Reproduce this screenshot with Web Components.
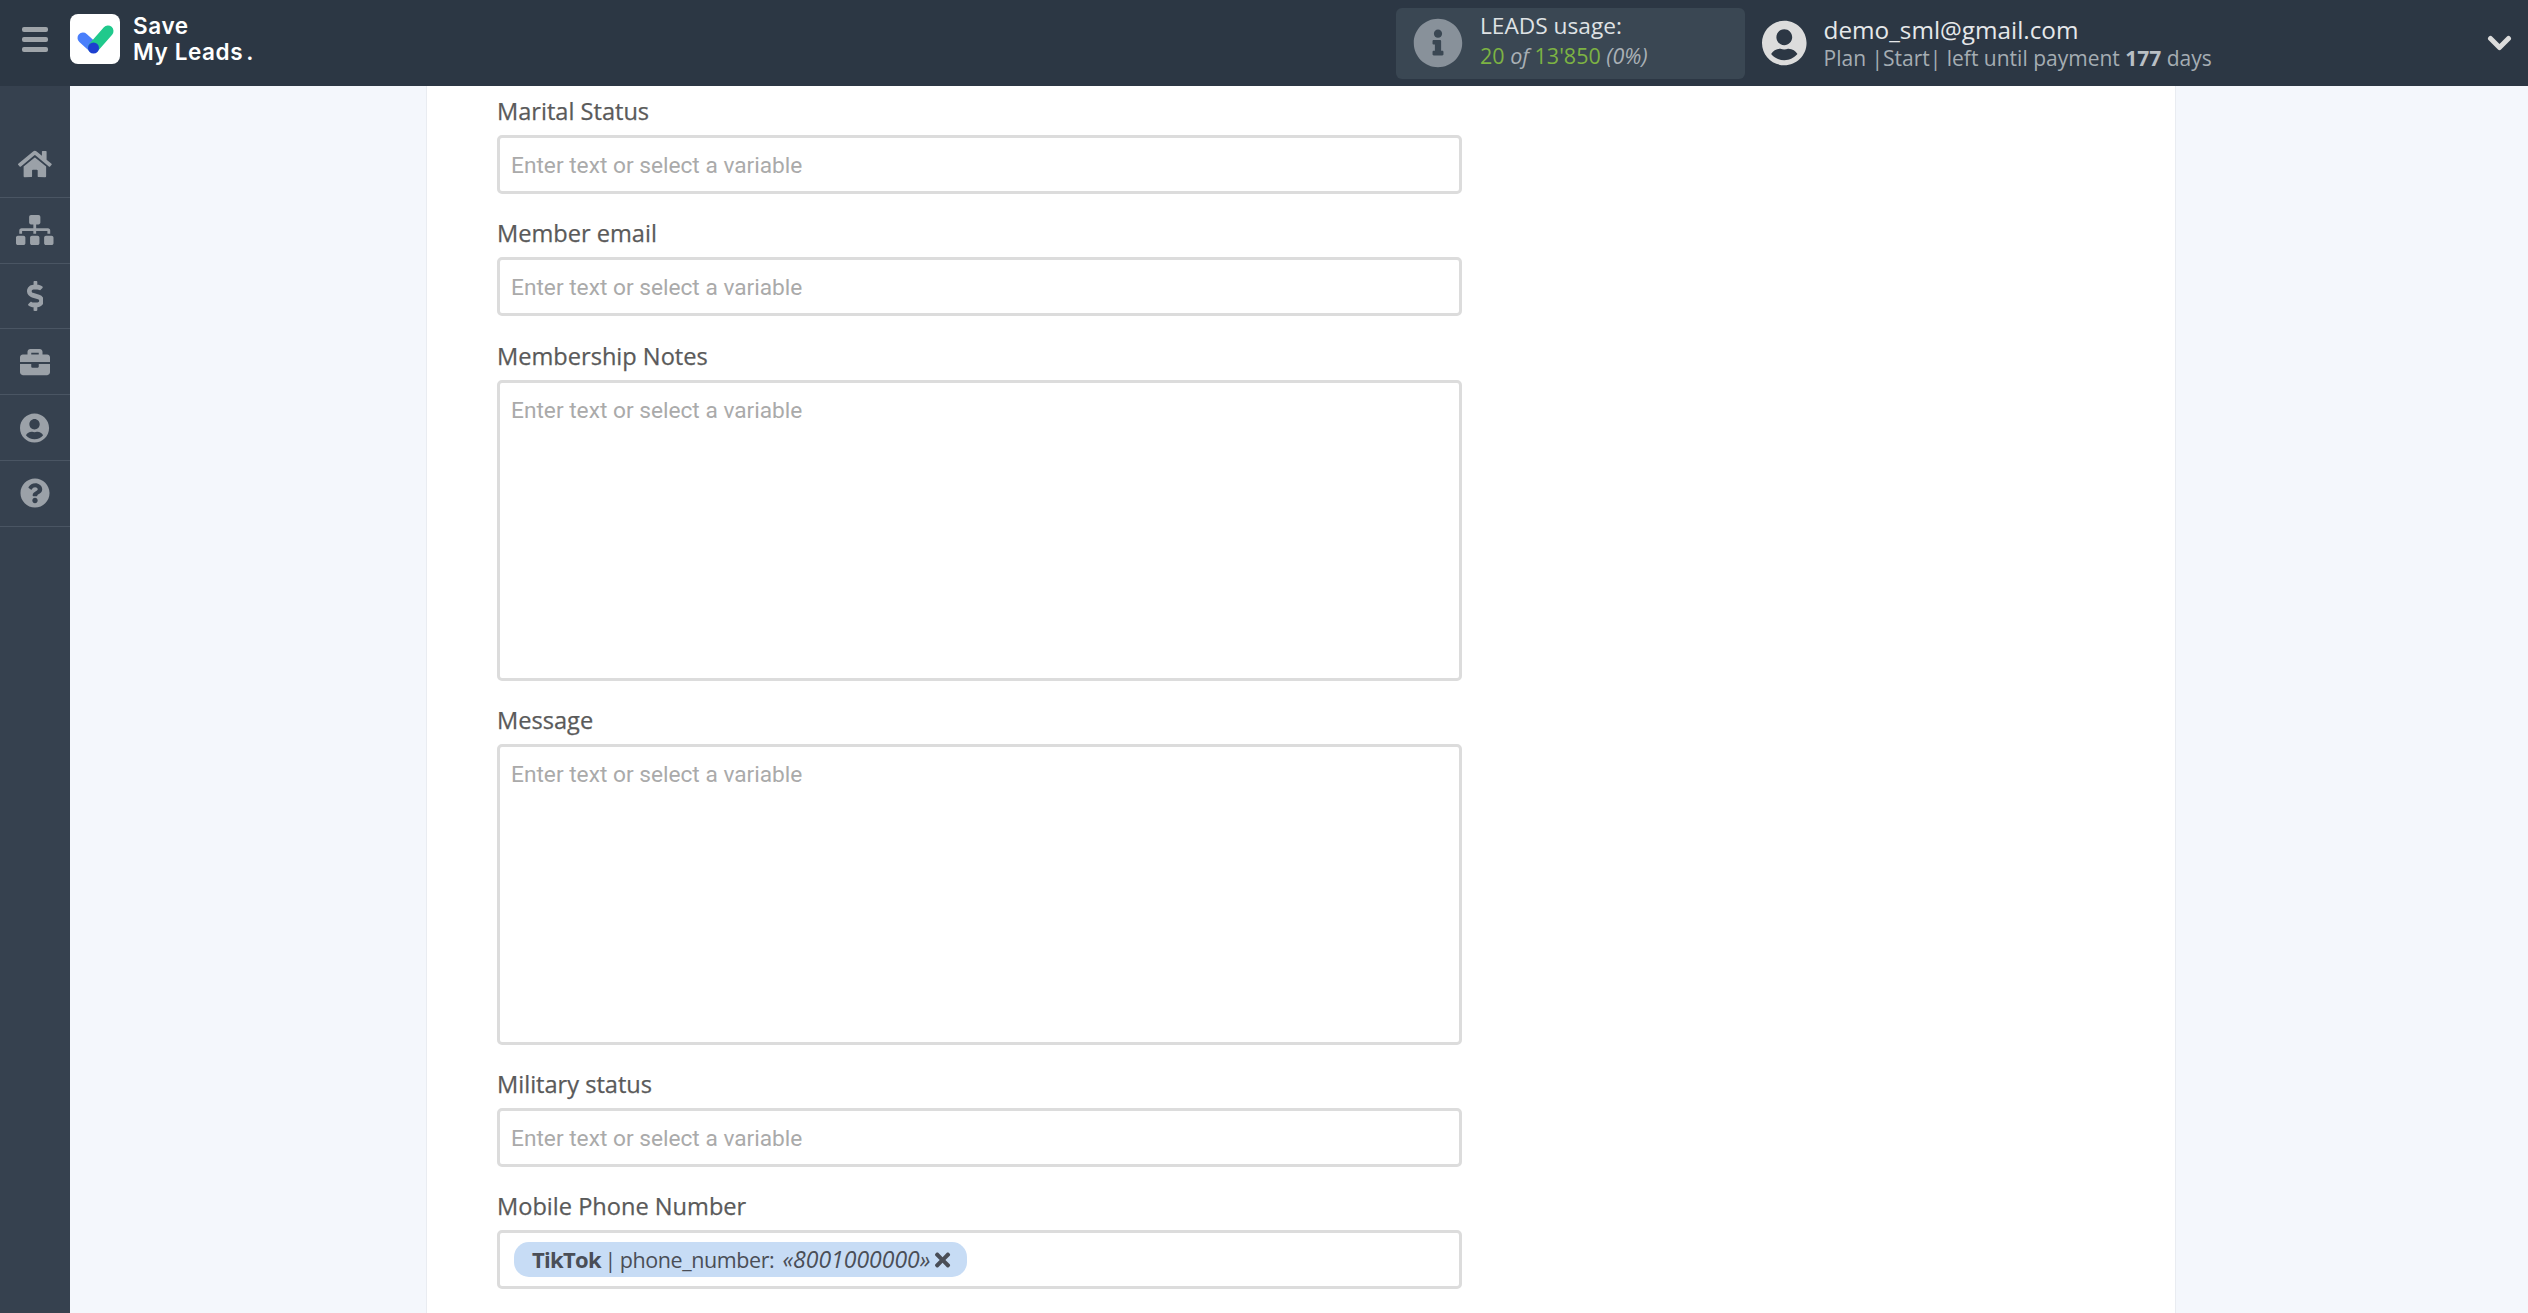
<!DOCTYPE html>
<html lang="en">
<head>
<meta charset="utf-8">
<title>Save My Leads</title>
<style>
  html, body { margin: 0; height: 100%; overflow: hidden; background: #f4f7fc; }
</style>
</head>
<body>
<app-shell>
  <top-bar slot="top"></top-bar>
  <side-nav slot="side"></side-nav>
  <form-card>
    <form-field label="Marital Status" placeholder="Enter text or select a variable"></form-field>
    <form-field label="Member email" placeholder="Enter text or select a variable"></form-field>
    <form-field label="Membership Notes" placeholder="Enter text or select a variable" tall></form-field>
    <form-field label="Message" placeholder="Enter text or select a variable" tall></form-field>
    <form-field label="Military status" placeholder="Enter text or select a variable"></form-field>
    <form-field label="Mobile Phone Number">
      <variable-chip source="TikTok" name="phone_number" value="«8001000000»"></variable-chip>
    </form-field>
  </form-card>
</app-shell>

<script>
// FontAwesome style glyphs used in the nav and chip
const ICONS = {
  home: ['0 0 576 512', 'M280.37 148.26L96 300.11V464a16 16 0 0 0 16 16l112.06-.29a16 16 0 0 0 15.92-16V368a16 16 0 0 1 16-16h64a16 16 0 0 1 16 16v95.64a16 16 0 0 0 16 16.05L464 480a16 16 0 0 0 16-16V300L295.67 148.26a12.19 12.19 0 0 0-15.3 0zM571.6 251.47L488 182.56V44.05a12 12 0 0 0-12-12h-56a12 12 0 0 0-12 12v72.61L318.47 43a48 48 0 0 0-61 0L4.34 251.47a12 12 0 0 0-1.6 16.9l25.5 31A12 12 0 0 0 45.15 301l235.22-193.74a12.19 12.19 0 0 1 15.3 0L530.9 301a12 12 0 0 0 16.9-1.6l25.5-31a12 12 0 0 0-1.7-16.93z'],
  sitemap: ['0 0 640 512', 'M128 352H32c-17.67 0-32 14.33-32 32v96c0 17.67 14.33 32 32 32h96c17.67 0 32-14.33 32-32v-96c0-17.67-14.33-32-32-32zm-24-80h192v48h48v-48h192v48h48v-57.59c0-21.17-17.23-38.41-38.41-38.41H344v-64h40c17.67 0 32-14.33 32-32V32c0-17.67-14.33-32-32-32H256c-17.67 0-32 14.33-32 32v96c0 17.67 14.33 32 32 32h40v64H94.41C73.23 224 56 241.23 56 262.41V320h48v-48zm264 80h-96c-17.67 0-32 14.33-32 32v96c0 17.67 14.33 32 32 32h96c17.67 0 32-14.33 32-32v-96c0-17.67-14.33-32-32-32zm240 0h-96c-17.67 0-32 14.33-32 32v96c0 17.67 14.33 32 32 32h96c17.67 0 32-14.33 32-32v-96c0-17.67-14.33-32-32-32z'],
  dollar: ['0 0 288 512', 'M209.2 233.4l-108-31.6C88.7 198.2 80 186.5 80 173.5c0-16.3 13.2-29.5 29.5-29.5h66.3c12.2 0 24.2 3.7 34.2 10.5 6.1 4.1 14.3 3.1 19.5-2l34.8-34c7.1-6.9 6.1-18.4-1.8-24.5C238 74.8 207.4 64.1 176 64V16c0-8.8-7.2-16-16-16h-32c-8.8 0-16 7.2-16 16v48h-2.5C45.8 64-5.4 118.7.5 183.6c4.2 46.1 39.4 83.6 83.8 96.6l102.5 30c12.5 3.7 21.2 15.3 21.2 28.3 0 16.3-13.2 29.5-29.5 29.5h-66.3C100 368 88 364.3 78 357.5c-6.1-4.1-14.3-3.1-19.5 2l-34.8 34c-7.1 6.9-6.1 18.4 1.8 24.5 24.5 19.2 55.1 29.9 86.5 30v48c0 8.8 7.2 16 16 16h32c8.8 0 16-7.2 16-16v-48.2c46.6-.9 90.3-28.6 105.7-72.7 21.5-61.6-14.6-124.8-72.5-141.7z'],
  briefcase: ['0 0 512 512', 'M320 336c0 8.84-7.16 16-16 16h-96c-8.84 0-16-7.16-16-16v-48H0v144c0 25.6 22.4 48 48 48h416c25.6 0 48-22.4 48-48V288H320v48zm144-208h-80V80c0-25.6-22.4-48-48-48H176c-25.6 0-48 22.4-48 48v48H48c-25.6 0-48 22.4-48 48v80h512v-80c0-25.6-22.4-48-48-48zm-144 0H192V96h128v32z'],
  user: ['0 0 496 512', 'M248 8C111 8 0 119 0 256s111 248 248 248 248-111 248-248S385 8 248 8zm0 96c48.6 0 88 39.4 88 88s-39.4 88-88 88-88-39.4-88-88 39.4-88 88-88zm0 344c-58.7 0-111.3-26.6-146.5-68.2 18.8-35.4 55.6-59.8 98.5-59.8 2.4 0 4.8.4 7.1 1.1 13 4.2 26.6 6.9 40.9 6.9 14.3 0 28-2.7 40.9-6.9 2.3-.7 4.7-1.1 7.1-1.1 42.9 0 79.7 24.4 98.5 59.8C359.3 421.4 306.7 448 248 448z'],
  question: ['0 0 512 512', 'M504 256c0 136.997-111.043 248-248 248S8 392.997 8 256C8 119.083 119.043 8 256 8s248 111.083 248 248zM262.655 90c-54.497 0-89.255 22.957-116.549 63.758-3.536 5.286-2.353 12.415 2.715 16.258l34.699 26.31c5.205 3.947 12.621 3.008 16.665-2.122 17.864-22.658 30.113-35.797 57.303-35.797 20.429 0 45.698 13.148 45.698 32.958 0 14.976-12.363 22.667-32.534 33.976C247.128 238.528 216 254.941 216 296v4c0 6.627 5.373 12 12 12h56c6.627 0 12-5.373 12-12v-1.333c0-28.462 83.186-29.647 83.186-106.667 0-58.002-60.165-102-116.531-102zM256 338c-25.365 0-46 20.635-46 46 0 25.364 20.635 46 46 46s46-20.636 46-46c0-25.365-20.635-46-46-46z'],
  info: ['0 0 512 512', 'M256 8C119 8 8 119 8 256s111 248 248 248 248-111 248-248S393 8 256 8zm0 110c23 0 42 19 42 42s-19 42-42 42-42-19-42-42 19-42 42-42zm56 254c0 6.6-5.4 12-12 12h-88c-6.6 0-12-5.4-12-12v-24c0-6.6 5.4-12 12-12h12v-64h-12c-6.6 0-12-5.4-12-12v-24c0-6.6 5.4-12 12-12h64c6.6 0 12 5.4 12 12v100h12c6.6 0 12 5.4 12 12z'],
  times: ['0 0 352 512', 'M242.72 256l100.07-100.07c12.28-12.28 12.28-32.19 0-44.48l-22.24-22.24c-12.28-12.28-32.19-12.28-44.48 0L176 189.28 75.93 89.21c-12.28-12.28-32.19-12.28-44.48 0L9.21 111.45c-12.28 12.28-12.28 32.19 0 44.48L109.28 256 9.21 356.07c-12.28 12.28-12.28 32.19 0 44.48l22.24 22.24c12.28 12.28 32.2 12.28 44.48 0L176 322.72l100.07 100.07c12.28 12.28 32.2 12.28 44.48 0l22.24-22.24c12.28-12.28 12.28-32.19 0-44.48L242.72 256z']
};

function icon(name, height) {
  const [box, d] = ICONS[name];
  return `<svg viewBox="${box}" height="${height}" fill="currentColor" aria-hidden="true"><path d="${d}"/></svg>`;
}

class AppShell extends HTMLElement {
  constructor() {
    super();
    this.attachShadow({ mode: 'open' });
    this.shadowRoot.innerHTML = `
      <style>
        :host {
          display: grid;
          grid-template-columns: 70px 1fr;
          grid-template-rows: 86px 1fr;
          height: 100vh;
          overflow: hidden;
        }
        .top { grid-column: 1 / 3; display: block; }
        .main { overflow: hidden; padding-left: 356px; }
      </style>
      <slot class="top" name="top"></slot>
      <slot name="side"></slot>
      <div class="main"><slot></slot></div>
    `;
  }
}

class TopBar extends HTMLElement {
  constructor() {
    super();
    this.attachShadow({ mode: 'open' });
    this.shadowRoot.innerHTML = `
      <style>
        :host {
          display: flex;
          align-items: center;
          height: 86px;
          background: #2c3744;
          font-family: "Open Sans", sans-serif;
          color: #e6e8ea;
        }
        .burger { width: 26px; margin: -7px 0 0 22px; display: grid; gap: 5.5px; }
        .burger i { height: 4.5px; border-radius: 2px; background: #9fa4a9; }
        .logo { margin: -8px 0 0 22px; width: 50px; height: 50px; display: block; }
        .brand {
          margin: -8px 0 0 13px;
          font: 600 22.5px/26px Inter, sans-serif;
          color: #fff;
          letter-spacing: .6px;
          white-space: nowrap;
        }
        .brand b { font-weight: 600; margin-left: 3px; }
        .usage {
          margin-left: 1142px;
          width: 349px;
          height: 71px;
          box-sizing: border-box;
          padding-left: 17px;
          display: flex;
          align-items: center;
          background: #3a4753;
          border-radius: 6px;
          color: #88919a;
          flex: none;
        }
        .usage svg { display: block; }
        .usage .txt { margin: -6px 0 0 17px; }
        .usage .l1 { font-size: 22.7px; line-height: 30px; color: #dfe2e4; }
        .usage .l2 { font-size: 21.5px; line-height: 29px; color: #7db343; }
        .usage em { color: #a9b0b6; }
        .account { margin-left: 17px; display: flex; align-items: center; color: #dcdcdc; flex: none; }
        .account svg { display: block; }
        .account .txt { margin-left: 17px; }
        .mail { font-size: 24.3px; line-height: 30px; color: #e6e8ea; }
        .plan { font-size: 21px; line-height: 27px; color: #a5adb3; }
        .plan b { font-weight: 700; color: #b9bfc4; }
        .chev { margin-left: auto; margin-right: 16px; width: 25px; height: 16px; display: block; color: #dcdcdc; flex: none; }
      </style>
      <div class="burger"><i></i><i></i><i></i></div>
      <svg class="logo" viewBox="0 0 50 50">
        <rect width="50" height="50" rx="8" fill="#fff"/>
        <path d="M13 24L23.5 33.5" stroke="#4a7ffb" stroke-width="11" stroke-linecap="round" fill="none"/>
        <path d="M23.5 33.5L38 17" stroke="#20c98c" stroke-width="11" stroke-linecap="round" fill="none"/>
        <circle cx="23.5" cy="34" r="5.5" fill="#1d3fd0"/>
      </svg>
      <div class="brand">Save<br>My Leads<b>.</b></div>
      <div class="usage">
        ${icon('info', 50)}
        <div class="txt">
          <div class="l1">LEADS usage:</div>
          <div class="l2">20 <em>of</em> 13'850 <em>(0%)</em></div>
        </div>
      </div>
      <div class="account">
        ${icon('user', 46)}
        <div class="txt">
          <div class="mail">demo_sml@gmail.com</div>
          <div class="plan">Plan |Start| left until payment <b>177</b> days</div>
        </div>
      </div>
      <svg class="chev" viewBox="0 0 25 16"><path d="M3.5 3.5L12.5 12.5L21.5 3.5" stroke="currentColor" stroke-width="5" stroke-linecap="round" stroke-linejoin="round" fill="none"/></svg>
    `;
  }
}

class SideNav extends HTMLElement {
  constructor() {
    super();
    this.attachShadow({ mode: 'open' });
    const items = ['home', 'sitemap', 'dollar', 'briefcase', 'user', 'question'];
    this.shadowRoot.innerHTML = `
      <style>
        :host {
          display: block;
          background: #36414f;
          padding-top: 46px;
          color: #9ba1a8;
          height: 100%;
          box-sizing: border-box;
        }
        div {
          height: 65.8px;
          box-sizing: border-box;
          display: flex;
          align-items: center;
          justify-content: center;
          border-bottom: 1px solid #4a5563;
        }
        svg { display: block; }
      </style>
      ${items.map(n => `<div>${icon(n, 30)}</div>`).join('')}
    `;
  }
}

class FormCard extends HTMLElement {
  constructor() {
    super();
    this.attachShadow({ mode: 'open' });
    this.shadowRoot.innerHTML = `
      <style>
        :host {
          display: block;
          width: 1750px;
          box-sizing: border-box;
          padding: 10px 0 0 70px;
          background: #fff;
          border-left: 1px solid #e9ecf1;
          border-right: 1px solid #e9ecf1;
          height: 1227px;
        }
        .list { display: grid; gap: 24.25px; width: 965px; }
      </style>
      <div class="list"><slot></slot></div>
    `;
  }
}

class FormField extends HTMLElement {
  constructor() {
    super();
    this.attachShadow({ mode: 'open' });
    const tall = this.hasAttribute('tall');
    const hint = this.getAttribute('placeholder');
    this.shadowRoot.innerHTML = `
      <style>
        :host { display: block; }
        label {
          display: block;
          font: 500 23.6px/30px "Open Sans", sans-serif;
          -webkit-text-stroke: .25px #5a5a5a;
          color: #5a5a5a;
          margin-bottom: 9px;
        }
        .box {
          box-sizing: border-box;
          height: ${tall ? 301 : 59}px;
          border: 3px solid #dcdcdc;
          border-radius: 5px;
          background: #fff;
          padding: ${tall ? 14 : 2}px 11px 0;
          display: flex;
          align-items: ${tall ? 'flex-start' : 'center'};
        }
        .hint { font: 400 22.7px/28px Roboto, sans-serif; color: #aaa; }
        ::slotted(variable-chip) { margin: -2px 0 0 3px; }
      </style>
      <label>${this.getAttribute('label')}</label>
      <div class="box">
        ${hint ? `<span class="hint">${hint}</span>` : ''}
        <slot></slot>
      </div>
    `;
  }
}

class VariableChip extends HTMLElement {
  constructor() {
    super();
    this.attachShadow({ mode: 'open' });
    this.shadowRoot.innerHTML = `
      <style>
        :host {
          display: inline-flex;
          align-items: center;
          height: 35px;
          box-sizing: border-box;
          padding: 0 16px 0 18px;
          border-radius: 15px;
          background: #c7dcf5;
          font: 400 21.5px/35px "Open Sans", sans-serif;
          color: #4a4e57;
          white-space: pre;
        }
        b { font-weight: 700; font-size: 22px; letter-spacing: -.7px; }
        span { letter-spacing: -.4px; word-spacing: -1.5px; }
        i { font-style: italic; font-size: 23px; margin-left: 8px; letter-spacing: 0; }
        svg { display: block; margin-left: 5px; }
      </style>
      <b>${this.getAttribute('source')}</b><span> | ${this.getAttribute('name')}:</span><i>${this.getAttribute('value')}</i>${icon('times', 22)}
    `;
  }
}

customElements.define('app-shell', AppShell);
customElements.define('top-bar', TopBar);
customElements.define('side-nav', SideNav);
customElements.define('form-card', FormCard);
customElements.define('form-field', FormField);
customElements.define('variable-chip', VariableChip);
</script>
</body>
</html>
